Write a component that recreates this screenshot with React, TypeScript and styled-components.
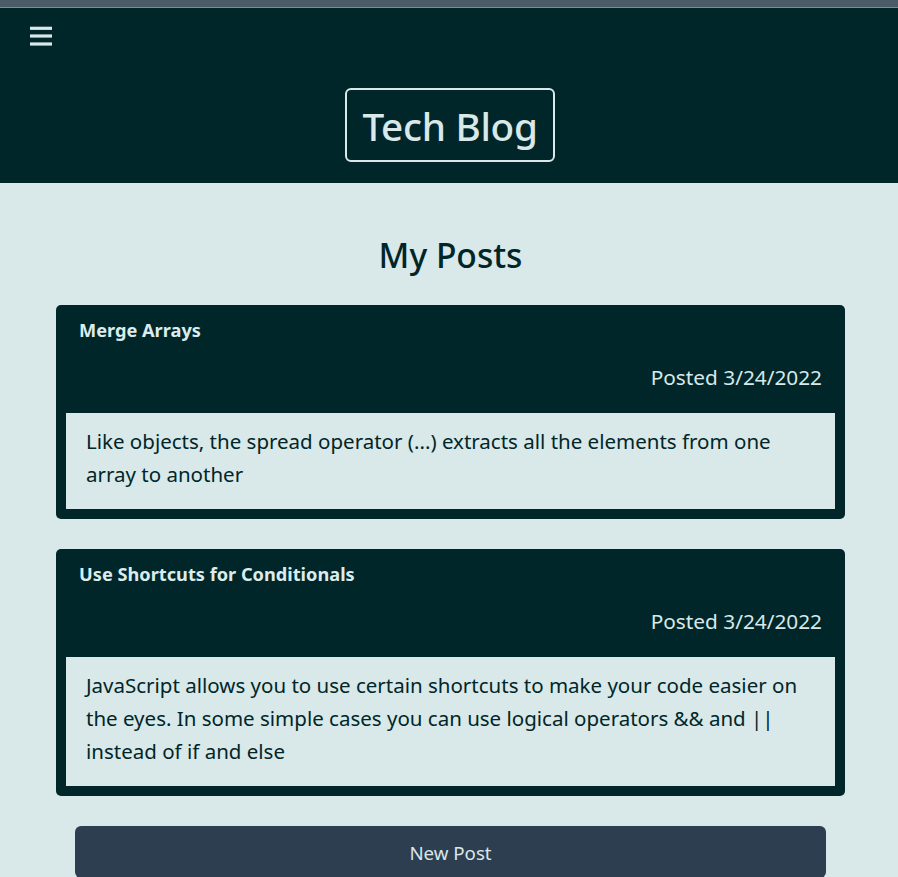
import React from "react";
import styled, { createGlobalStyle } from "styled-components";

const FONT = `"Noto Sans", "Open Sans", "Liberation Sans", sans-serif`;
const DARK = "#002629";
const LIGHT = "#d9e8e8";

const Global = createGlobalStyle`
  html, body { margin: 0; padding: 0; }
  body {
    background: ${LIGHT};
    font-family: ${FONT};
    color: ${DARK};
    -webkit-font-smoothing: antialiased;
  }
  * { box-sizing: border-box; }
`;

const Page = styled.div`
  min-height: 877px;
  display: flex;
  flex-direction: column;
`;

const TopStrip = styled.div`
  height: 8px;
  background: #4b5b67;
  border-bottom: 1px solid #7f8d94;
`;

const Header = styled.header`
  background: ${DARK};
  height: 175px;
  display: flex;
  flex-direction: column;
  padding: 18px 0 0;
`;

const MenuButton = styled.button`
  align-self: flex-start;
  margin-left: 30px;
  padding: 0;
  width: 22px;
  height: 20px;
  border: none;
  background: transparent;
  color: ${LIGHT};
  display: flex;
  align-items: center;
  justify-content: center;
  cursor: pointer;
`;

const TitleBox = styled.h1`
  align-self: center;
  margin: 42px 0 0 2px;
  width: 210px;
  height: 74px;
  border: 2px solid ${LIGHT};
  border-radius: 6px;
  display: flex;
  align-items: center;
  justify-content: center;
  padding-top: 2px;
  font-size: 38.7px;
  font-weight: 500;
  color: ${LIGHT};
  letter-spacing: -0.3px;
`;

const Main = styled.main`
  display: flex;
  flex-direction: column;
  align-items: center;
  padding: 50px 53px 0 56px;
`;

const PageTitle = styled.h2`
  margin: 0 0 28px;
  height: 44px;
  line-height: 44px;
  font-size: 33.6px;
  font-weight: 500;
  color: ${DARK};
`;

const PostList = styled.div`
  width: 100%;
  display: flex;
  flex-direction: column;
  gap: 30px;
`;

const Card = styled.article`
  background: ${DARK};
  border-radius: 5px;
  padding: 10px;
`;

const CardHead = styled.div`
  display: flex;
  flex-direction: column;
  padding: 1px 13px 0;
`;

const CardTitle = styled.h3`
  margin: 0;
  font-size: 18.2px;
  font-weight: 700;
  line-height: 28px;
  color: #dcecec;
`;

const Posted = styled.p`
  margin: 17px 0 19px;
  align-self: flex-end;
  font-size: 20.8px;
  line-height: 33px;
  color: ${LIGHT};
`;

const CardBody = styled.p`
  margin: 0;
  background: ${LIGHT};
  padding: 12px 20px 18px;
  font-size: 20.5px;
  line-height: 33px;
  color: ${DARK};
`;

const NewPostButton = styled.button`
  margin-top: 30px;
  width: 751px;
  height: 52px;
  border: none;
  border-radius: 6px;
  background: #2d3e50;
  color: ${LIGHT};
  font-family: ${FONT};
  font-size: 18.7px;
  cursor: pointer;
`;

const HamburgerIcon = () => (
  <svg width="22" height="20" viewBox="0 0 22 20" fill="none" stroke="currentColor" strokeWidth="3.2">
    <line x1="0" y1="2.3" x2="22" y2="2.3" />
    <line x1="0" y1="10" x2="22" y2="10" />
    <line x1="0" y1="18" x2="22" y2="18" />
  </svg>
);

const posts = [
  {
    title: "Merge Arrays",
    date: "3/24/2022",
    body: "Like objects, the spread operator (...) extracts all the elements from one array to another",
  },
  {
    title: "Use Shortcuts for Conditionals",
    date: "3/24/2022",
    body: "JavaScript allows you to use certain shortcuts to make your code easier on the eyes. In some simple cases you can use logical operators && and || instead of if and else",
  },
];

export default function App() {
  return (
    <Page>
      <Global />
      <TopStrip />
      <Header>
        <MenuButton aria-label="menu">
          <HamburgerIcon />
        </MenuButton>
        <TitleBox>Tech Blog</TitleBox>
      </Header>
      <Main>
        <PageTitle>My Posts</PageTitle>
        <PostList>
          {posts.map((p) => (
            <Card key={p.title}>
              <CardHead>
                <CardTitle>{p.title}</CardTitle>
                <Posted>Posted {p.date}</Posted>
              </CardHead>
              <CardBody>{p.body}</CardBody>
            </Card>
          ))}
        </PostList>
        <NewPostButton>New Post</NewPostButton>
      </Main>
    </Page>
  );
}
